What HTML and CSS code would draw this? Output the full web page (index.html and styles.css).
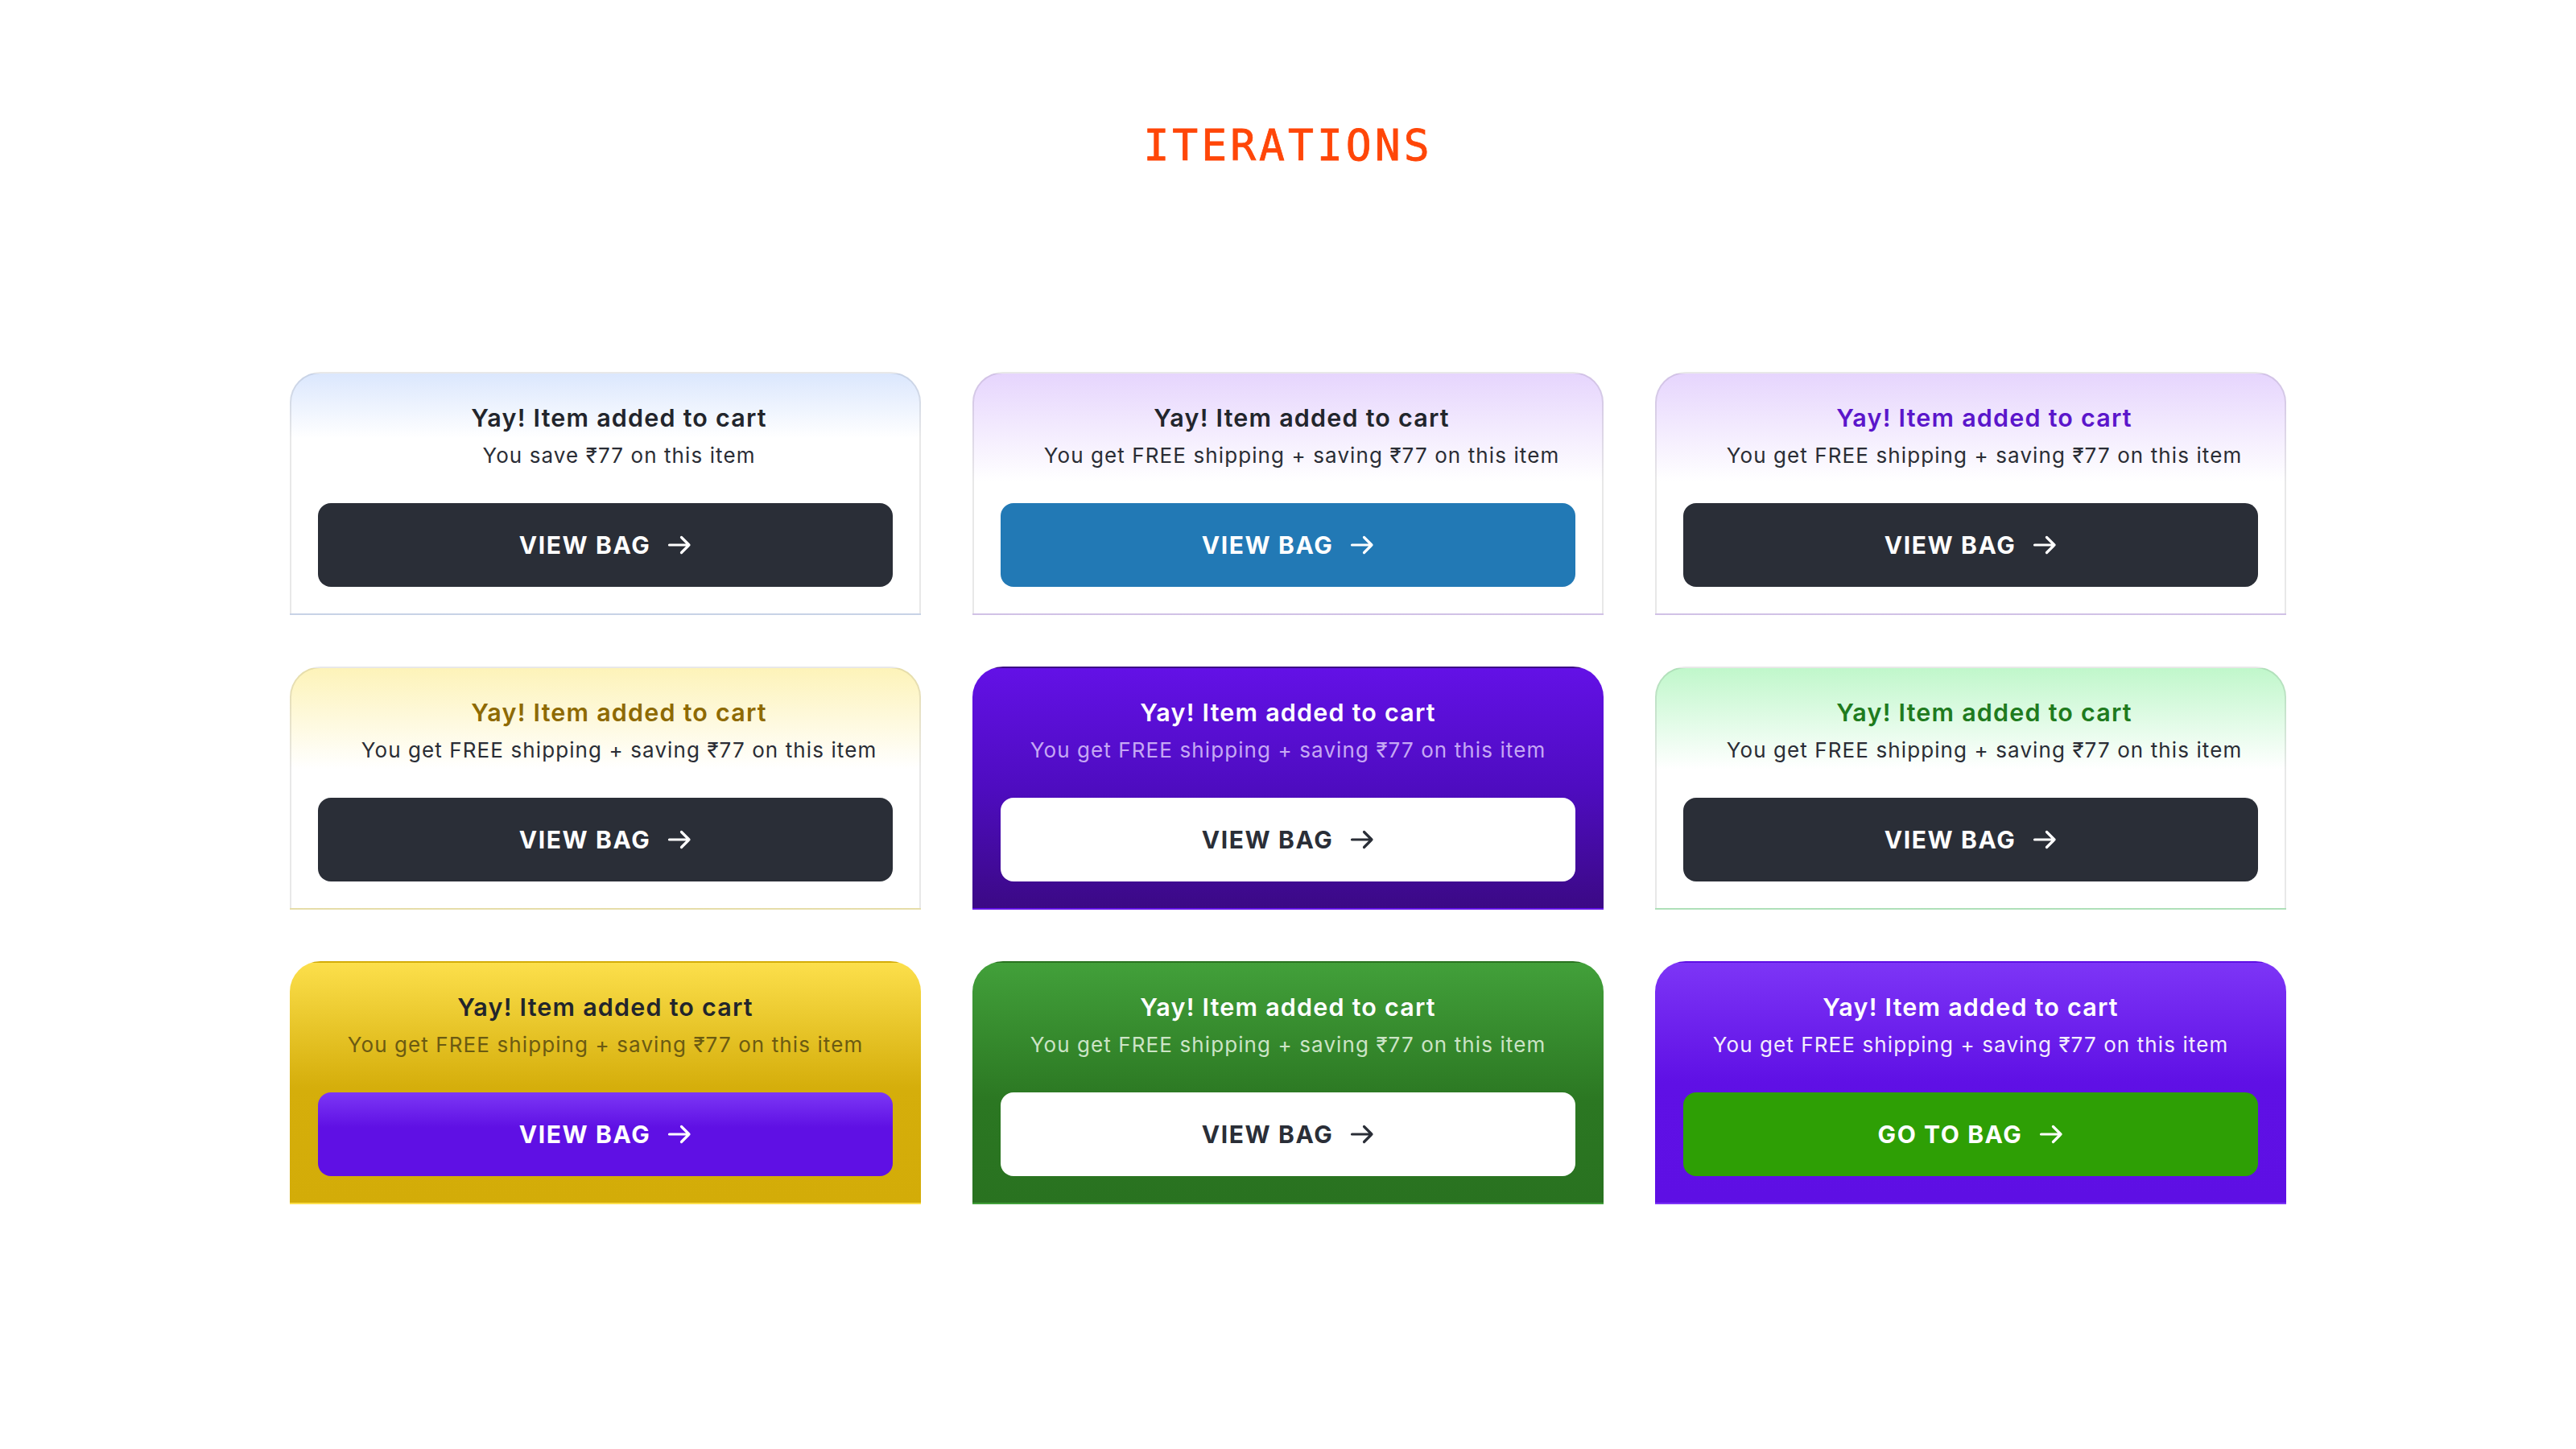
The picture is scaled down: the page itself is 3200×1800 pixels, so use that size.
FILE: index.html
```html
<!DOCTYPE html>
<html lang="en">
<head>
<meta charset="utf-8">
<title>Iterations</title>
<link rel="stylesheet" href="styles.css">
</head>
<body>
<main class="page">
  <h1 class="heading">ITERATIONS</h1>
  <section class="grid">
    <div class="card card-outline card-blue-tint">
      <p class="title">Yay! Item added to cart</p>
      <p class="sub">You save ₹77 on this item</p>
      <button class="btn btn-dark"><span>VIEW BAG</span><svg class="arrow" viewBox="0 0 30 26"><path d="M2.5 13H27M17.5 3.5L27 13l-9.5 9.5"/></svg></button>
    </div>
    <div class="card card-outline card-lav-tint">
      <p class="title">Yay! Item added to cart</p>
      <p class="sub">You get FREE shipping + saving ₹77 on this item</p>
      <button class="btn btn-blue"><span>VIEW BAG</span><svg class="arrow" viewBox="0 0 30 26"><path d="M2.5 13H27M17.5 3.5L27 13l-9.5 9.5"/></svg></button>
    </div>
    <div class="card card-outline card-lav-tint">
      <p class="title title-purple">Yay! Item added to cart</p>
      <p class="sub">You get FREE shipping + saving ₹77 on this item</p>
      <button class="btn btn-dark"><span>VIEW BAG</span><svg class="arrow" viewBox="0 0 30 26"><path d="M2.5 13H27M17.5 3.5L27 13l-9.5 9.5"/></svg></button>
    </div>

    <div class="card card-outline card-yellow-tint">
      <p class="title title-gold">Yay! Item added to cart</p>
      <p class="sub">You get FREE shipping + saving ₹77 on this item</p>
      <button class="btn btn-dark"><span>VIEW BAG</span><svg class="arrow" viewBox="0 0 30 26"><path d="M2.5 13H27M17.5 3.5L27 13l-9.5 9.5"/></svg></button>
    </div>
    <div class="card card-purple-deep">
      <p class="title title-white">Yay! Item added to cart</p>
      <p class="sub sub-lav">You get FREE shipping + saving ₹77 on this item</p>
      <button class="btn btn-white"><span>VIEW BAG</span><svg class="arrow" viewBox="0 0 30 26"><path d="M2.5 13H27M17.5 3.5L27 13l-9.5 9.5"/></svg></button>
    </div>
    <div class="card card-outline card-green-tint">
      <p class="title title-green">Yay! Item added to cart</p>
      <p class="sub">You get FREE shipping + saving ₹77 on this item</p>
      <button class="btn btn-dark"><span>VIEW BAG</span><svg class="arrow" viewBox="0 0 30 26"><path d="M2.5 13H27M17.5 3.5L27 13l-9.5 9.5"/></svg></button>
    </div>

    <div class="card card-yellow">
      <p class="title">Yay! Item added to cart</p>
      <p class="sub sub-olive">You get FREE shipping + saving ₹77 on this item</p>
      <button class="btn btn-purple"><span>VIEW BAG</span><svg class="arrow" viewBox="0 0 30 26"><path d="M2.5 13H27M17.5 3.5L27 13l-9.5 9.5"/></svg></button>
    </div>
    <div class="card card-green">
      <p class="title title-white">Yay! Item added to cart</p>
      <p class="sub sub-mint">You get FREE shipping + saving ₹77 on this item</p>
      <button class="btn btn-white"><span>VIEW BAG</span><svg class="arrow" viewBox="0 0 30 26"><path d="M2.5 13H27M17.5 3.5L27 13l-9.5 9.5"/></svg></button>
    </div>
    <div class="card card-violet">
      <p class="title title-white">Yay! Item added to cart</p>
      <p class="sub sub-white">You get FREE shipping + saving ₹77 on this item</p>
      <button class="btn btn-green"><span>GO TO BAG</span><svg class="arrow" viewBox="0 0 30 26"><path d="M2.5 13H27M17.5 3.5L27 13l-9.5 9.5"/></svg></button>
    </div>
  </section>
</main>
</body>
</html>
```
FILE: styles.css
```css
* { box-sizing: border-box; }

html, body {
  margin: 0;
  padding: 0;
  background: #ffffff;
}

body {
  font-family: "Inter", "Noto Sans", "DejaVu Sans", sans-serif;
  color: #2a2d35;
}

.page {
  padding-top: 151px;
}

.heading {
  margin: 0;
  text-align: center;
  font-family: "DejaVu Sans Mono", "Liberation Mono", monospace;
  font-weight: 400;
  font-size: 53px;
  line-height: 60px;
  color: #ff4608;
  letter-spacing: 4px;
  -webkit-text-stroke: 0.8px #ff4608;
}

.grid {
  margin-top: 251px;
  display: grid;
  grid-template-columns: repeat(3, 784px);
  grid-auto-rows: 302px;
  gap: 64px;
  justify-content: center;
}

.card {
  border: 2px solid transparent;
  border-radius: 38px 38px 0 0;
  background-origin: border-box;
  background-clip: border-box;
  padding: 37px 33px 33px;
  display: flex;
  flex-direction: column;
  align-items: stretch;
  text-align: center;
}

.card-outline {
  border-color: rgba(0, 0, 0, 0.09);
}

.title {
  margin: 0;
  font-size: 30.5px;
  line-height: 36px;
  font-weight: 600;
  letter-spacing: 1.2px;
  color: #22252c;
}

.sub {
  margin: 13px 0 0;
  font-size: 26px;
  line-height: 32px;
  font-weight: 400;
  letter-spacing: 1.1px;
  color: #2a2d35;
}

.card-outline .title,
.card-outline .sub {
  padding-left: 34px;
}

.btn {
  margin-top: 43px;
  height: 104px;
  border: none;
  border-radius: 16px;
  display: flex;
  align-items: center;
  justify-content: center;
  gap: 21px;
  font-family: "Inter", "Noto Sans", sans-serif;
  font-size: 30px;
  font-weight: 700;
  letter-spacing: 1.6px;
  color: #ffffff;
  cursor: pointer;
  padding: 0;
}

.arrow {
  width: 30px;
  height: 26px;
  fill: none;
  stroke: currentColor;
  stroke-width: 3.2;
  stroke-linecap: round;
  stroke-linejoin: round;
  flex: none;
}

/* card backgrounds */
.card-blue-tint { background: linear-gradient(180deg, #dbe7fd 0%, #ffffff 27%, #ffffff 100%); }
.card-lav-tint { background: linear-gradient(180deg, #e6d5fd 0%, #ffffff 45%, #ffffff 100%); }
.card-yellow-tint { background: linear-gradient(180deg, #fdf3b9 0%, #ffffff 42%, #ffffff 100%); }
.card-green-tint { background: linear-gradient(180deg, #c0f7cb 0%, #ffffff 42%, #ffffff 100%); }

.card-purple-deep { background: linear-gradient(180deg, #6311e6 0%, #4e0cc0 50%, #3b0985 100%); }
.card-yellow { background: linear-gradient(180deg, #fcdf4b 0%, #d5ae0b 52%, #d3ac08 100%); }
.card-green { background: linear-gradient(180deg, #42a03a 0%, #2b7722 58%, #297220 100%); }
.card-violet { background: linear-gradient(180deg, #7d35f6 0%, #5f10e5 50%, #5e0fe4 100%); }

/* title colours */
.title-purple { color: #5b16cb; }
.title-gold { color: #8e6a02; }
.title-green { color: #1f7b1e; }
.title-white { color: #ffffff; }

/* subtitle colours */
.sub-lav { color: #c6a8f4; }
.sub-olive { color: #6b5a12; }
.sub-mint { color: #cce4c6; }
.sub-white { color: #f3edfd; }

/* buttons */
.btn-dark { background: #2a2e37; }
.btn-blue { background: #2279b5; }
.btn-white { background: #ffffff; color: #2a2e37; }
.btn-purple { background: linear-gradient(180deg, #7c37f5 0%, #5f10e4 42%, #5f10e4 100%); }
.btn-green { background: #2e9f05; }
```
